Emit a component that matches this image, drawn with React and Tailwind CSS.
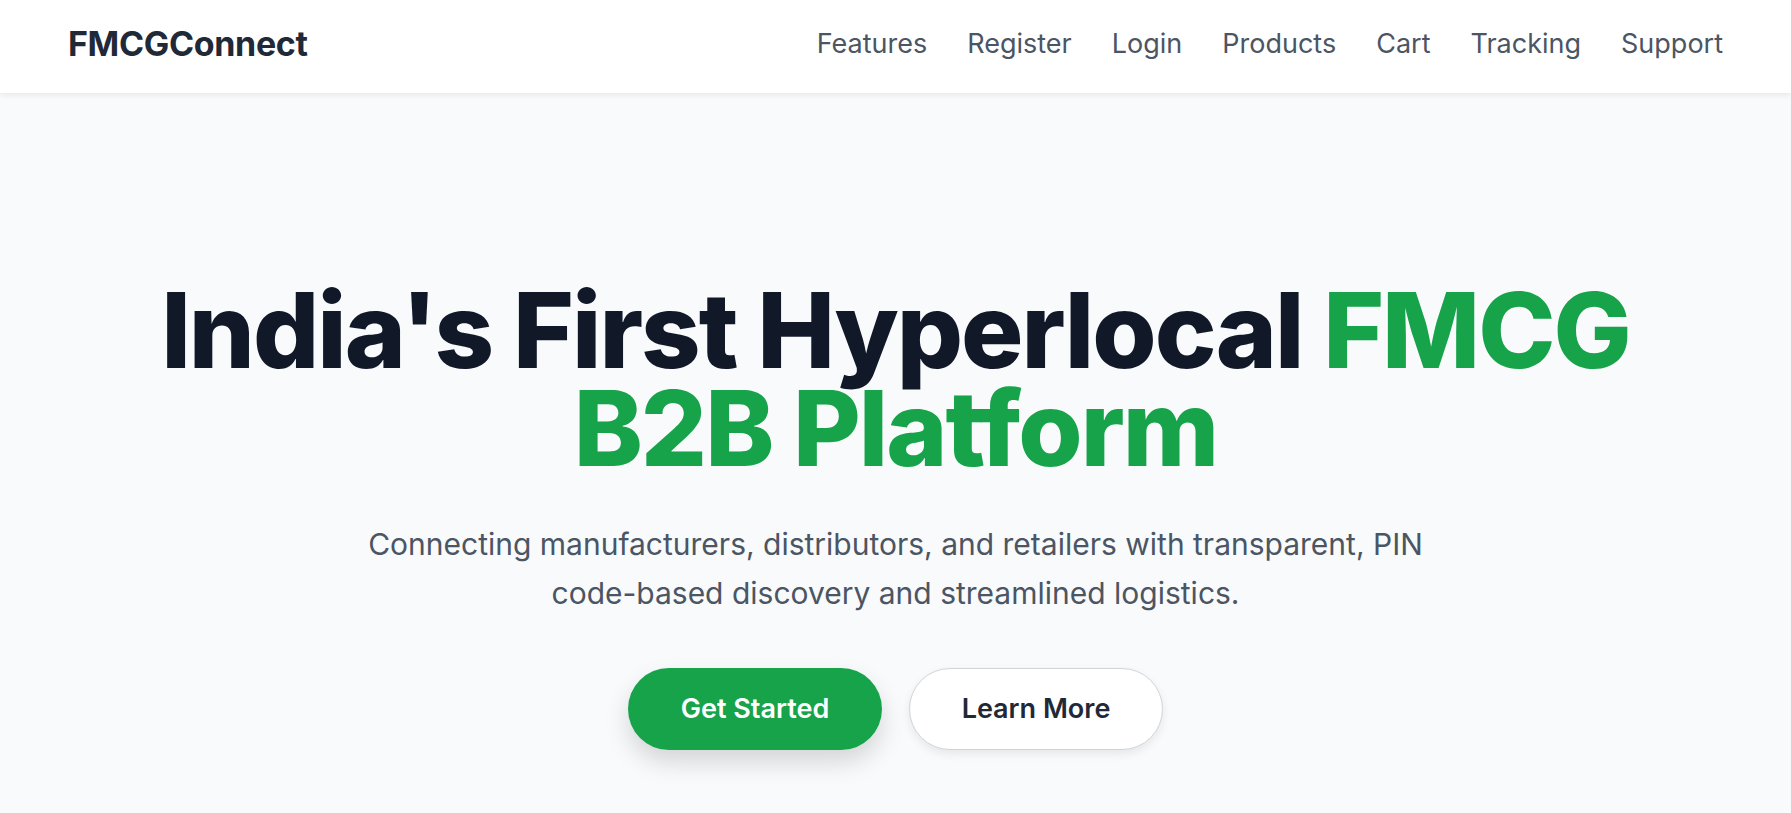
export default function App() {
  const links = ['Features', 'Register', 'Login', 'Products', 'Cart', 'Tracking', 'Support']

  return (
    <div className="min-h-screen bg-[#f8fafc] font-['Inter',sans-serif]">
      <header className="bg-white shadow-[0_2px_6px_rgba(0,0,0,0.08)] relative z-10">
        <div className="h-[93px] pb-[6px] px-[68px] flex items-center justify-between">
          <div className="text-[34px] font-bold text-[#1f2937] tracking-[-0.01em]">FMCGConnect</div>
          <nav className="flex items-center gap-[40px] pt-[2px] text-[27px] text-[#4b5563]">
            {links.map((l) => (
              <a key={l} href="#" className="hover:text-green-600">{l}</a>
            ))}
          </nav>
        </div>
      </header>

      <main className="flex flex-col items-center text-center pt-[188px]">
        <h1 className="text-[104px] leading-[98px] font-extrabold tracking-[-0.019em] text-[#111827]">
          India's First Hyperlocal <span className="text-[#16a34a]">FMCG</span>
          <br />
          <span className="text-[#16a34a]">B2B Platform</span>
        </h1>

        <p className="mt-[43px] max-w-[1100px] text-[30px] leading-[49px] text-[#4b5563]">
          Connecting manufacturers, distributors, and retailers with transparent, PIN code-based discovery and streamlined logistics.
        </p>

        <div className="mt-[50px] flex items-center gap-[27px]">
          <button className="w-[254px] h-[82px] rounded-full bg-[#16a34a] text-white text-[27px] font-semibold shadow-[0_12px_24px_rgba(0,0,0,0.15)]">
            Get Started
          </button>
          <button className="w-[254px] h-[82px] rounded-full bg-white border border-[#d1d5db] text-[#1f2937] text-[27px] font-semibold shadow-[0_4px_10px_rgba(0,0,0,0.08)]">
            Learn More
          </button>
        </div>
      </main>
    </div>
  )
}
